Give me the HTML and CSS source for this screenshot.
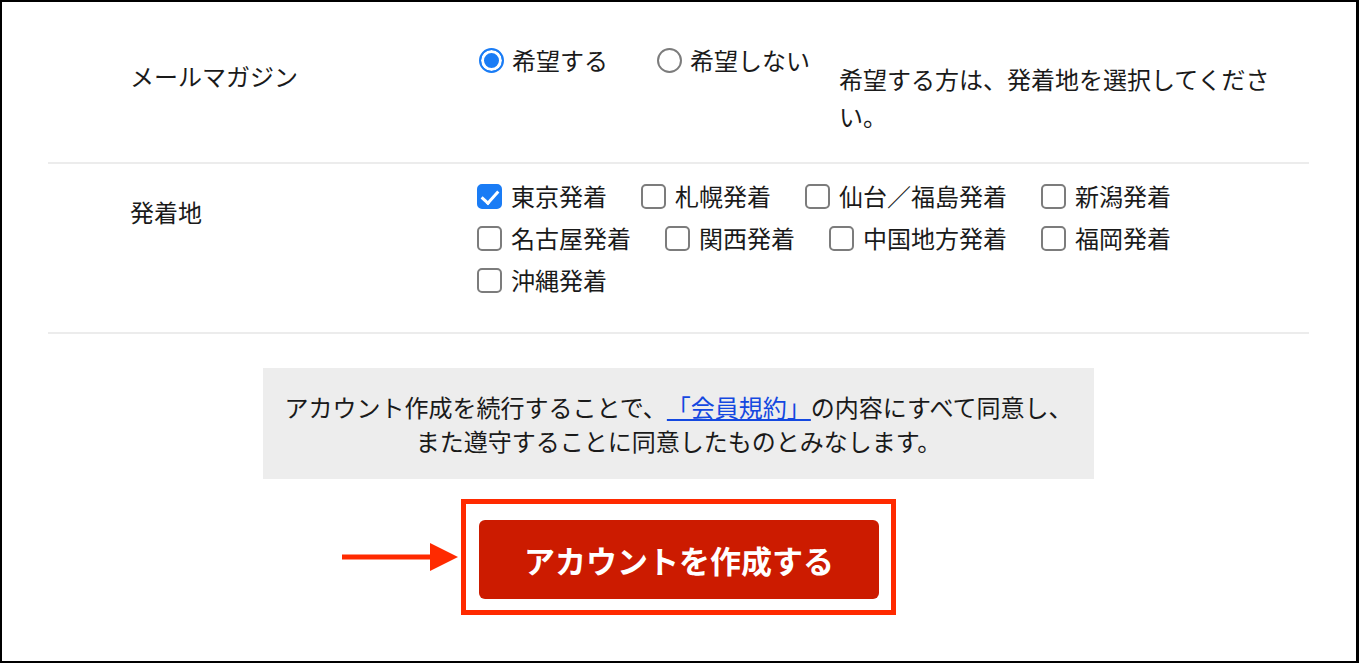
FILE: index.html
```html
<!DOCTYPE html>
<html lang="ja">
<head>
  <meta charset="UTF-8" />
  <meta name="viewport" content="width=device-width, initial-scale=1.0"/>
  <title>アカウント作成</title>
  <link rel="stylesheet" href="styles.css">
</head>
<body>
  <div class="frame">
    <form class="signup">

      <div class="row row-mail">
        <div class="row-label">メールマガジン</div>
        <div class="mail-value">
          <label class="choice choice-radio">
            <input type="radio" name="mail" checked>
            <span class="mark"></span>
            希望する
          </label>
          <label class="choice choice-radio">
            <input type="radio" name="mail">
            <span class="mark"></span>
            希望しない
          </label>
          <p class="note">希望する方は、発着地を選択してください。</p>
        </div>
      </div>

      <div class="row row-area">
        <div class="row-label">発着地</div>
        <div class="area-list">
          <label class="choice choice-check"><input type="checkbox" checked><span class="mark"></span>東京発着</label>
          <label class="choice choice-check"><input type="checkbox"><span class="mark"></span>札幌発着</label>
          <label class="choice choice-check"><input type="checkbox"><span class="mark"></span>仙台／福島発着</label>
          <label class="choice choice-check"><input type="checkbox"><span class="mark"></span>新潟発着</label>
          <label class="choice choice-check"><input type="checkbox"><span class="mark"></span>名古屋発着</label>
          <label class="choice choice-check"><input type="checkbox"><span class="mark"></span>関西発着</label>
          <label class="choice choice-check"><input type="checkbox"><span class="mark"></span>中国地方発着</label>
          <label class="choice choice-check"><input type="checkbox"><span class="mark"></span>福岡発着</label>
          <label class="choice choice-check"><input type="checkbox"><span class="mark"></span>沖縄発着</label>
        </div>
      </div>

      <div class="agree">
        アカウント作成を続行することで、<a href="#">「会員規約」</a>の内容にすべて同意し、<br>
        また遵守することに同意したものとみなします。
      </div>

      <div class="submit">
        <div class="highlight">
          <svg class="arrow" width="116" height="28" viewBox="0 0 116 28">
            <rect x="0" y="11.5" width="92" height="5" fill="#ff2a00"/>
            <polygon points="88,0 116,14 88,28" fill="#ff2a00"/>
          </svg>
          <button type="button" class="btn-create">アカウントを作成する</button>
        </div>
      </div>

    </form>
  </div>
</body>
</html>
```

FILE: styles.css
```css
:root {
  --texto: #1a1a1a;
  --azul: #1a7cf5;
  --borda: #7c7c7c;
  --linha: #ececec;
  --vermelho: #ff2a00;
  --botao: #cc1b00;
}

* {
  margin: 0;
  padding: 0;
  box-sizing: border-box;
}

body {
  background-color: #fff;
  color: var(--texto);
  font-family: "Noto Sans CJK JP", "Noto Sans", sans-serif;
  text-spacing-trim: space-all;
}

.frame {
  height: 663px;
  border: 2px solid #000;
  border-right-width: 3px;
  padding: 25px 47px 0 46px;
  overflow: hidden;
}

/* linhas do formulario */
.row {
  display: grid;
  grid-template-columns: 429px 1fr;
  border-bottom: 2px solid var(--linha);
}

.row-mail {
  padding: 12px 0 28px;
}

.row-area {
  padding: 11px 0 31px;
}

.row-label {
  padding: 19px 0 0 82px;
  font-size: 24px;
  line-height: 36px;
}

.mail-value {
  display: flex;
  align-items: flex-start;
}

.note {
  width: 440px;
  margin-top: 21px;
  font-size: 24px;
  line-height: 37px;
}

.choice {
  display: flex;
  align-items: center;
  font-size: 24px;
  line-height: 42px;
  white-space: nowrap;
  cursor: pointer;
}

.choice input {
  display: none;
}

.mark {
  position: relative;
  width: 25px;
  height: 25px;
  flex-shrink: 0;
  background-color: #fff;
  border: 2px solid var(--borda);
}

/* radio */
.choice-radio {
  margin-right: 47px;
}

.choice-radio:nth-child(2) {
  margin-right: 29px;
}

.choice-radio .mark {
  margin: 0 8px 0 2px;
  border-radius: 50%;
}

.choice-radio input:checked + .mark {
  border: 2px solid var(--azul);
  background-color: var(--azul);
  box-shadow: inset 0 0 0 3px #fff;
}

/* checkbox */
.area-list {
  display: flex;
  flex-wrap: wrap;
}

.choice-check {
  margin-right: 34px;
}

.choice-check .mark {
  margin-right: 9px;
  border-radius: 5px;
}

.choice-check input:checked + .mark {
  border-color: var(--azul);
  background-color: var(--azul);
}

.choice-check input:checked + .mark::after {
  content: "";
  position: absolute;
  left: 6px;
  top: 1px;
  width: 7px;
  height: 14px;
  border-right: 3.5px solid #fff;
  border-bottom: 3.5px solid #fff;
  transform: rotate(42deg);
}

/* termos */
.agree {
  width: 831px;
  margin: 34px auto 0;
  padding: 22px 0 21px;
  background-color: #ededed;
  text-align: center;
  font-size: 24px;
  line-height: 34px;
}

.agree a {
  color: #1448e0;
  text-decoration: underline;
}

/* botao */
.submit {
  display: flex;
  justify-content: center;
  margin-top: 20px;
}

.highlight {
  position: relative;
  border: 5px solid var(--vermelho);
  padding: 16px 12px 11px 13px;
}

.arrow {
  position: absolute;
  right: calc(100% + 8px);
  top: 50%;
  transform: translateY(-50%);
  display: block;
}

.btn-create {
  display: block;
  width: 400px;
  height: 79px;
  border: none;
  border-radius: 6px;
  background-color: var(--botao);
  color: #fff;
  font-family: inherit;
  font-size: 31px;
  font-weight: 700;
  cursor: pointer;
}
```
